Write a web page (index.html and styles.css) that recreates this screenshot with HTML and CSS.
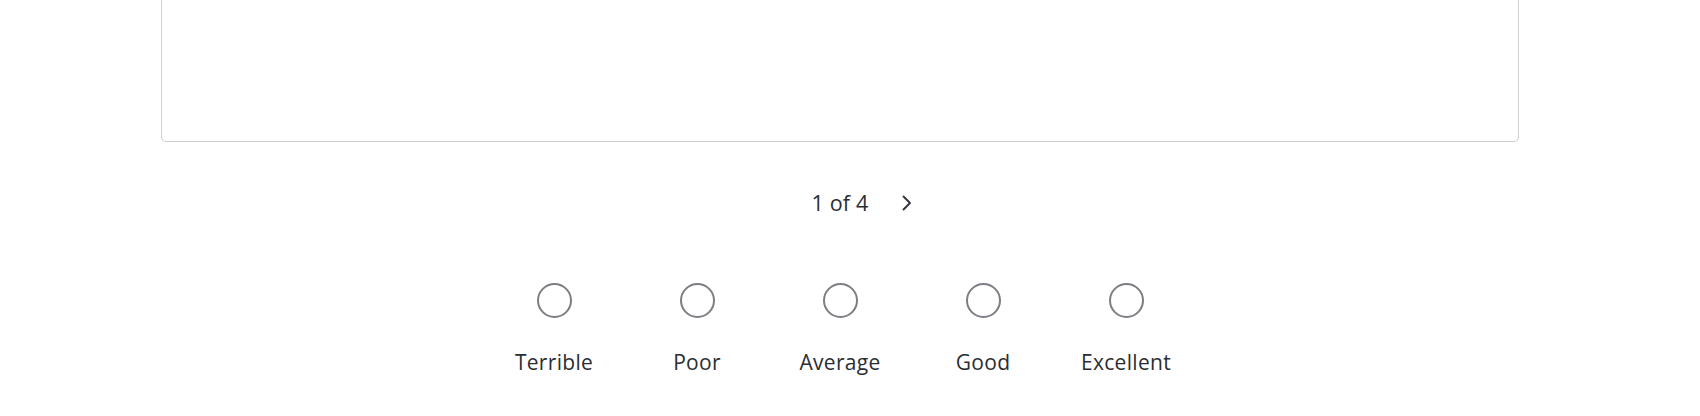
FILE: index.html
```html
<!DOCTYPE html>
<html lang="en">
<head>
<meta charset="utf-8">
<title>Rating</title>
<link rel="stylesheet" href="styles.css">
</head>
<body>
<div class="wrap">
  <div class="card"></div>
  <div class="pager">
    <button class="nav nav-hidden" aria-hidden="true"></button>
    <span class="count">1 of 4</span>
    <button class="nav" aria-label="Next">
      <svg width="12" height="16" viewBox="0 0 12 16"><path d="M2.5 1.5 L9 8 L2.5 14.5" fill="none" stroke="#32363a" stroke-width="1.9" stroke-linecap="round" stroke-linejoin="round"/></svg>
    </button>
  </div>
  <div class="scale">
    <div class="opt"><span class="radio"></span><span class="label">Terrible</span></div>
    <div class="opt"><span class="radio"></span><span class="label">Poor</span></div>
    <div class="opt"><span class="radio"></span><span class="label">Average</span></div>
    <div class="opt"><span class="radio"></span><span class="label">Good</span></div>
    <div class="opt"><span class="radio"></span><span class="label">Excellent</span></div>
  </div>
</div>
</body>
</html>
```

FILE: styles.css
```css
html, body {
  margin: 0;
  padding: 0;
  background: #ffffff;
}
body {
  font-family: "Open Sans", "Liberation Sans", sans-serif;
  color: #2b2e31;
  overflow: hidden;
}
.wrap {
  width: 1358px;
  margin-left: 161px;
  display: flex;
  flex-direction: column;
  align-items: center;
}
.card {
  align-self: stretch;
  box-sizing: border-box;
  height: 163px;
  margin-top: -21px;
  border: 1.5px solid #cfcfcf;
  border-radius: 5px;
  background: #fff;
}
.pager {
  margin-top: 41px;
  height: 40px;
  display: flex;
  align-items: center;
  gap: 22px;
}
.count {
  font-size: 21.5px;
  line-height: 40px;
  letter-spacing: 0.2px;
}
.nav {
  width: 32px;
  height: 32px;
  padding: 0;
  border: none;
  background: transparent;
  display: flex;
  align-items: center;
  justify-content: center;
}
.nav-hidden {
  visibility: hidden;
}
.scale {
  margin-top: 60px;
  display: flex;
}
.opt {
  width: 143px;
  display: flex;
  flex-direction: column;
  align-items: center;
}
.radio {
  box-sizing: border-box;
  width: 35px;
  height: 35px;
  border: 2px solid #7b7e82;
  border-radius: 50%;
}
.label {
  margin-top: 30px;
  font-size: 21px;
  line-height: 28px;
  letter-spacing: 0.3px;
  white-space: nowrap;
}
```
